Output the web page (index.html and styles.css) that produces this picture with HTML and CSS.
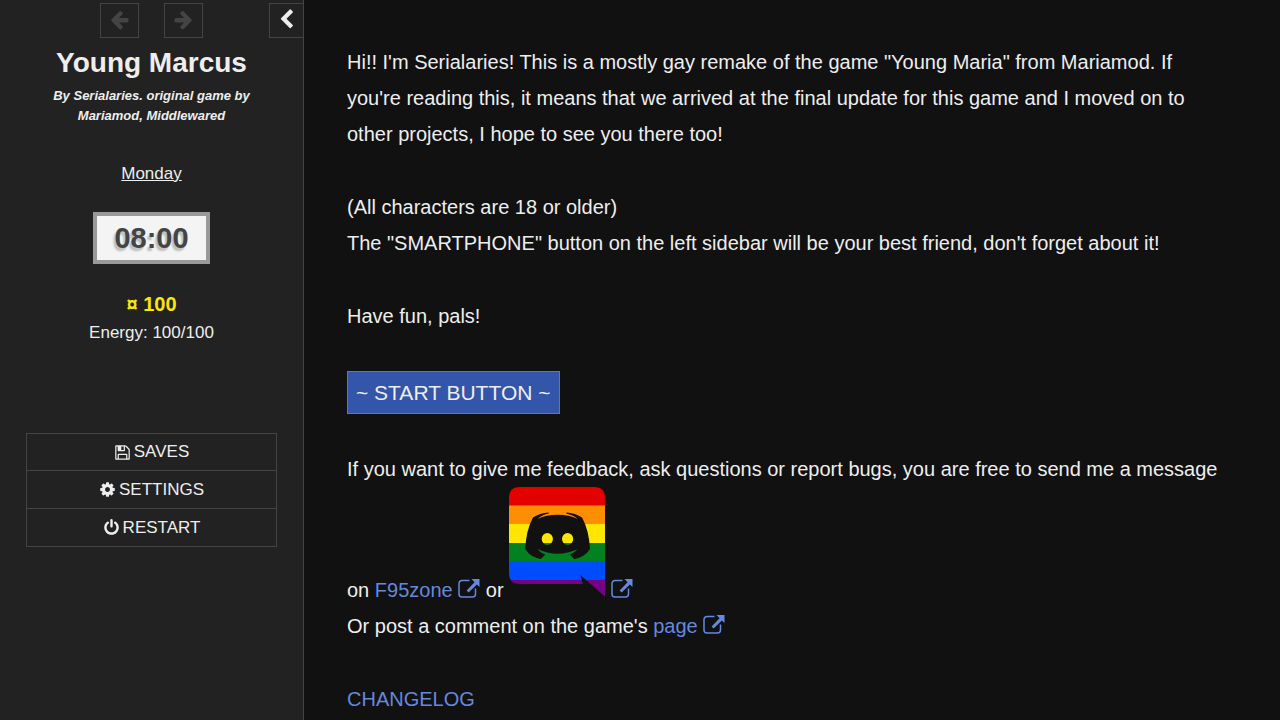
FILE: index.html
```html
<!DOCTYPE html>
<html lang="en">
<head>
    <meta charset="UTF-8">
    <title>Young Marcus</title>
    <meta name="viewport" content="width=device-width, initial-scale=1">
    <link rel="stylesheet" href="styles.css">
</head>
<body>

<svg class="defs" width="0" height="0" aria-hidden="true">
    <symbol id="external" viewBox="0 0 22 20">
        <path d="M11.500 2.500H4a3 3 0 0 0-3 3V16a3 3 0 0 0 3 3h10.500a3 3 0 0 0 3-3v-5.500" fill="none" stroke="currentColor" stroke-width="1.500"/>
        <path d="M13.500 1H21.500V9L18.900 6.400 10.600 14.600 8.600 12.600 16.600 4.200z" fill="currentColor"/>
    </symbol>
</svg>

<aside class="sidebar">
    <div class="history">
        <button disabled aria-label="Back"><svg viewBox="0 0 1792 1792"><path d="M1664 896v128q0 53-32.500 90.500t-84.500 37.500h-704l293 294q38 36 38 90t-38 90l-75 76q-37 37-90 37-52 0-91-37l-651-652q-37-37-37-90 0-52 37-91l651-650q38-38 91-38 52 0 90 38l75 74q38 38 38 91t-38 91l-293 293h704q52 0 84.500 37.500t32.500 90.500z"/></svg></button>
        <button disabled aria-label="Forward"><svg viewBox="0 0 1792 1792"><path d="M1600 960q0 54-37 91l-651 651q-39 37-91 37-51 0-90-37l-75-75q-38-38-38-91t38-91l293-293h-704q-52 0-84.500-37.500t-32.500-90.500v-128q0-53 32.500-90.500t84.500-37.500h704l-293-294q-38-36-38-90t38-90l75-75q38-38 90-38 53 0 91 38l651 651q37 35 37 90z"/></svg></button>
        <button class="toggle" aria-label="Toggle the sidebar"><svg viewBox="0 0 1792 1792"><path d="M1427 301l-531 531 531 531q19 19 19 45t-19 45l-166 166q-19 19-45 19t-45-19l-742-742q-19-19-19-45t19-45l742-742q19-19 45-19t45 19l166 166q19 19 19 45t-19 45z"/></svg></button>
    </div>

    <h1>Young Marcus</h1>
    <p class="byline">By Serialaries. original game by Mariamod, Middlewared</p>

    <div class="day">Monday</div>
    <div class="clock">08:00</div>
    <div class="money">¤ 100</div>
    <div class="energy">Energy: 100/100</div>

    <nav class="menu">
        <button><svg viewBox="0 0 1792 1792"><path d="M512 1536h768v-384h-768v384zm896 0h128v-896q0-14-10-38.500t-20-34.500l-281-281q-10-10-34-20t-39-10v416q0 40-28 68t-68 28h-576q-40 0-68-28t-28-68v-416h-128v1280h128v-416q0-40 28-68t68-28h832q40 0 68 28t28 68v416zm-384-928v-320q0-13-9.500-22.500t-22.500-9.500h-192q-13 0-22.500 9.500t-9.500 22.500v320q0 13 9.500 22.500t22.500 9.500h192q13 0 22.500-9.500t9.500-22.500zm640 32v928q0 40-28 68t-68 28h-1344q-40 0-68-28t-28-68v-1344q0-40 28-68t68-28h928q40 0 88 20t76 48l280 280q28 28 48 76t20 88z"/></svg>SAVES</button>
        <button><svg viewBox="0 0 1792 1792"><path d="M1152 896q0-106-75-181t-181-75-181 75-75 181 75 181 181 75 181-75 75-181zm512-109v222q0 12-8 23t-20 13l-185 28q-19 54-39 91 35 50 107 138 10 12 10 25t-9 23q-27 37-99 108t-94 71q-12 0-26-9l-138-108q-44 23-91 38-16 136-29 186-7 28-36 28h-222q-14 0-24.500-8.500t-11.500-21.500l-28-184q-49-16-90-37l-141 107q-10 9-25 9-14 0-25-11-126-114-165-168-7-10-7-23 0-12 8-23 15-21 51-66.500t54-70.500q-27-50-41-99l-183-27q-13-2-21-12.500t-8-23.500v-222q0-12 8-23t19-13l186-28q14-46 39-92-40-57-107-138-10-12-10-24 0-10 9-23 26-36 98.500-107.500t94.500-71.500q13 0 26 10l138 107q44-23 91-38 16-136 29-186 7-28 36-28h222q14 0 24.500 8.500t11.500 21.500l28 184q49 16 90 37l142-107q9-9 24-9 13 0 25 10 129 119 165 170 7 8 7 22 0 12-8 23-15 21-51 66.500t-54 70.500q26 50 41 98l183 28q13 2 21 12.500t8 23.500z"/></svg>SETTINGS</button>
        <button><svg viewBox="0 0 1792 1792"><path d="M1664 896q0 156-61 298t-164 245-245 164-298 61-298-61-245-164-164-245-61-298q0-182 80.500-343t226.500-270q43-32 95.500-25t83.500 50q32 42 24.500 94.500t-49.500 84.500q-98 74-151.500 181t-53.500 228q0 104 40.500 198.500t109.500 163.500 163.500 109.500 198.500 40.500 198.500-40.500 163.500-109.500 109.500-163.500 40.500-198.500q0-121-53.500-228t-151.500-181q-42-32-49.500-84.500t24.500-94.500q31-43 84-50t95 25q146 109 226.500 270t80.500 343zm-640-768v640q0 52-38 90t-90 38-90-38-38-90v-640q0-52 38-90t90-38 90 38 38 90z"/></svg>RESTART</button>
    </nav>
</aside>

<main class="passage">
    <p>Hi!! I'm Serialaries! This is a mostly gay remake of the game "Young Maria" from Mariamod. If you're reading this, it means that we arrived at the final update for this game and I moved on to other projects, I hope to see you there too!</p>

    <p>(All characters are 18 or older)<br>
    The "SMARTPHONE" button on the left sidebar will be your best friend, don't forget about it!</p>

    <p>Have fun, pals!</p>

    <button class="start">~ START BUTTON ~</button>

    <p>If you want to give me feedback, ask questions or report bugs, you are free to send me a message on
    <a href="#">F95zone <svg class="ext" aria-hidden="true"><use href="#external"/></svg></a> or
    <a href="#" aria-label="Discord"><svg class="discord" viewBox="0 0 96 110">
        <clipPath id="bubble"><path d="M11 0H85Q96 0 96 11V109.500L71.300 88 74 97H11Q0 97 0 86V11Q0 0 11 0z"/></clipPath>
        <g clip-path="url(#bubble)">
            <rect width="96" height="19" fill="#e50000"/>
            <rect y="18.500" width="96" height="19" fill="#ff8d00"/>
            <rect y="37" width="96" height="19" fill="#ffe600"/>
            <rect y="56" width="96" height="19" fill="#028121"/>
            <rect y="74.500" width="96" height="19" fill="#004cff"/>
            <rect y="93" width="96" height="17" fill="#770088"/>
        </g>
        <path fill="#111" fill-rule="evenodd" d="M39.500 25.500Q31 26 24 30.500 17 43 16.300 62 21 70 32 72L36.300 67.500Q31 65.500 28.700 62 38 66.700 48.600 66.700T68.500 62Q66 65.500 61 67.500L65.200 72Q76 70 81 62 80 43 73 30.500 66 26 57.500 25.500L57.300 26.600Q64 28 68.500 32 60 27.800 48.600 27.800T28.700 32Q33 28 39.800 26.600zM38.300 46A5.600 6 0 1 0 38.300 58A5.600 6 0 1 0 38.300 46zM58.600 46A5.600 6 0 1 0 58.600 58A5.600 6 0 1 0 58.600 46z"/>
    </svg> <svg class="ext" aria-hidden="true"><use href="#external"/></svg></a><br>
    Or post a comment on the game's <a href="#">page <svg class="ext" aria-hidden="true"><use href="#external"/></svg></a></p>

    <p><a href="#">CHANGELOG</a></p>
</main>

</body>
</html>
```

FILE: styles.css
```css
body { display: flex; min-height: 100vh; margin: 0; background-color: #111; color: #eee; font: 17px/28px "Liberation Sans", Arial, sans-serif; }
button { font: inherit; color: #eee; background-color: transparent; border: 1px solid #444; cursor: pointer; }
a { color: #68d; text-decoration: none; }
a:hover { color: #8af; text-decoration: underline; }
.defs { position: absolute; }

.sidebar { box-sizing: border-box; flex: none; width: 304px; padding-top: 3px; background-color: #222; border-right: 1px solid #444; text-align: center; }
.history { display: grid; grid-template-columns: 1fr 39px 39px 1fr; column-gap: 25px; }
.history button { display: flex; align-items: center; justify-content: center; height: 35px; padding: 0 0 2px; }
.history button:first-child { grid-column: 2; }
.history button:disabled { color: #444; cursor: default; }
.history svg { width: 21px; height: 21px; fill: currentColor; }
.history .toggle { justify-self: end; width: 34px; border-right: none; }

h1 { margin: 9px 0 0; font-size: 28px; line-height: 32px; }
.byline { width: 220px; margin: 7px auto 0; font-size: 13px; line-height: 20px; font-weight: bold; font-style: italic; }
.day { margin-top: 34px; text-decoration: underline; }
.clock { width: fit-content; margin: 24px auto; padding: 0 17px; border: 4px solid #999; background-color: #f4f4f4; color: #444; font-size: 29px; line-height: 44px; font-weight: bold; text-shadow: -2px 3px 2px #bbb; }
.money { color: #ffe600; font-size: 20px; font-weight: bold; line-height: 32px; }
.energy { line-height: 26px; }

.menu { display: flex; flex-direction: column; margin: 87px 26px 0; border: 1px solid #444; }
.menu button { box-sizing: border-box; display: flex; align-items: center; justify-content: center; gap: 3px; height: 36px; padding: 0; border: none; }
.menu button + button { height: 38px; border-top: 1px solid #444; }
.menu svg { width: 17px; height: 17px; fill: currentColor; }

.passage { flex: 1; min-width: 0; padding: 44px 53px 0 43px; font-size: 20px; line-height: 36px; }
.passage p { margin: 0 0 37px; }
.start { display: block; margin-bottom: 37px; padding: 2px 8px; font-size: 21px; line-height: 37px; background-color: #35a; border-color: #57c; }
.start:hover { background-color: #57c; }
.ext { width: 22px; height: 20px; vertical-align: -1px; }
.discord { width: 96px; height: 110px; }
```
